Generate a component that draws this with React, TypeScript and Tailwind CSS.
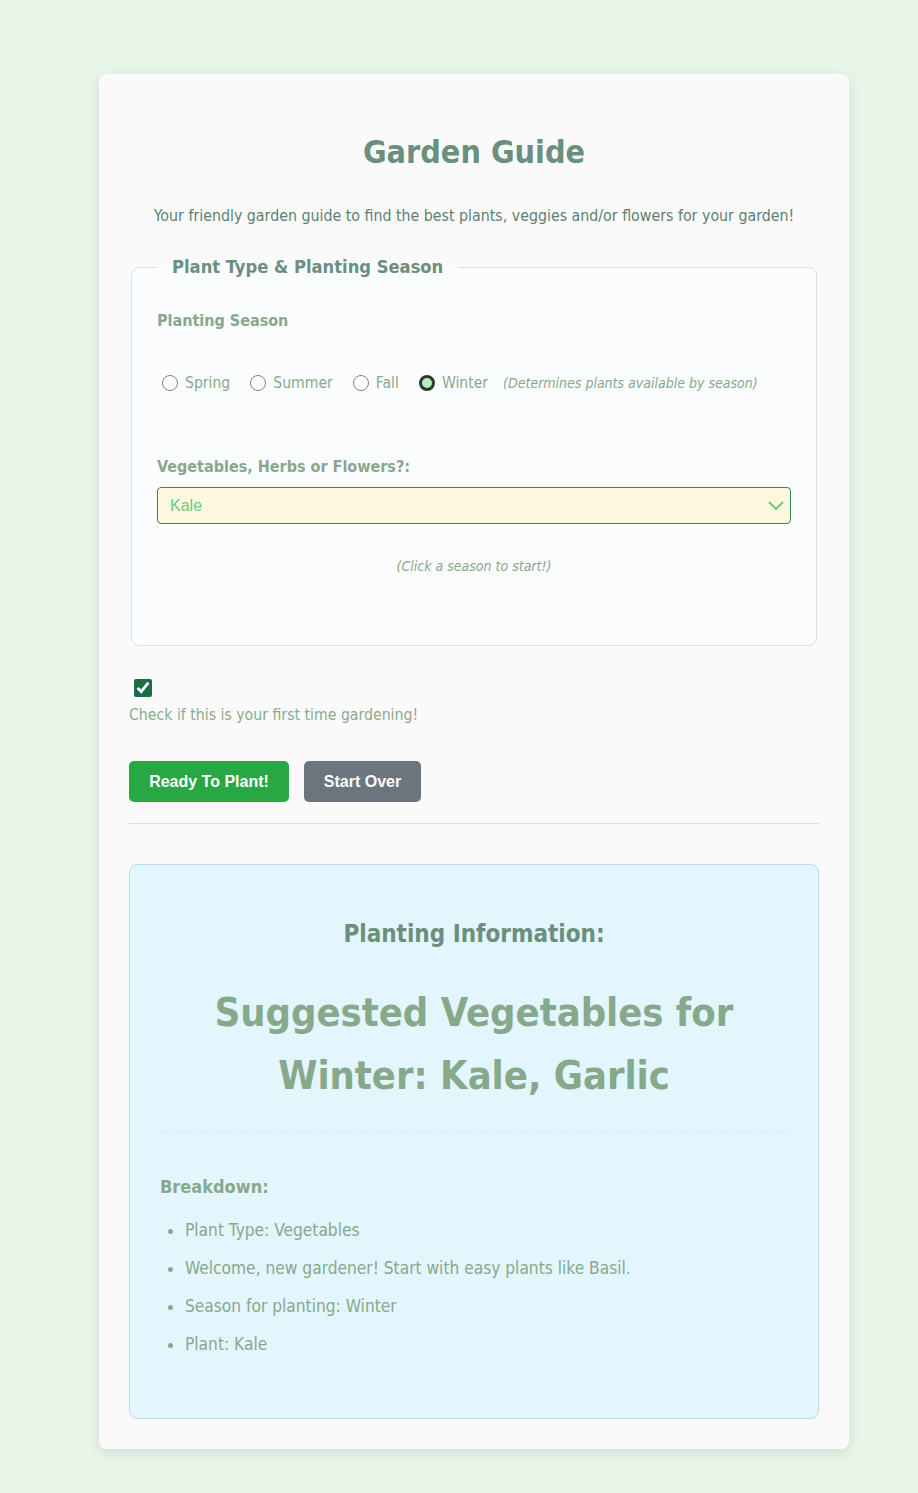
import React, { useState } from 'react';

const seasons = ['Spring', 'Summer', 'Fall', 'Winter'];

const breakdown = [
  'Plant Type: Vegetables',
  'Welcome, new gardener! Start with easy plants like Basil.',
  'Season for planting: Winter',
  'Plant: Kale',
];

export default function App() {
  const [season, setSeason] = useState('Winter');
  const [firstTime, setFirstTime] = useState(true);

  return (
    <div className="min-h-screen bg-[#e8f5e9] pt-[74px] pb-[45px] pl-[99px] font-['DejaVu_Sans_Condensed','DejaVu_Sans',sans-serif] font-stretch-condensed">
      {/* ── Card ── */}
      <div className="w-[750px] rounded-lg bg-[#fafafa] p-[30px] shadow-[0_4px_14px_rgba(0,0,0,0.1)]">
        <h1 className="mt-[28px] text-center text-[32px] leading-[40px] font-bold text-[#6b8f7d]">
          Garden Guide
        </h1>
        <p className="mt-[32px] text-center text-[15.8px] leading-[24px] text-[#5f7f70]">
          Your friendly garden guide to find the best plants, veggies and/or flowers for your garden!
        </p>

        {/* Plant type + season */}
        <fieldset className="mx-[2px] mt-[27px] rounded-lg border border-[#d3e3ee] bg-[#fbfcfe] px-[25px] pt-[30px] pb-[69px]">
          <legend className="px-[15px] text-[18.2px] leading-[24px] font-bold text-[#6b8f7d]">
            Plant Type &amp; Planting Season
          </legend>

          <div className="text-[16px] leading-[24px] font-bold text-[#88a88c]">Planting Season</div>

          <div className="mt-[38px] flex items-center text-[15.6px] leading-[24px] text-[#88a88c]">
            {seasons.map((s) => (
              <label key={s} className="mr-[15px] flex items-center">
                <input
                  type="radio"
                  name="season"
                  checked={season === s}
                  onChange={() => setSeason(s)}
                  className="mr-[7px] ml-[5px] h-[16px] w-[16px] appearance-none rounded-full border border-[#808080] bg-white checked:border-[3px] checked:border-[#2c3b32] checked:bg-[#b6efc2]"
                />
                {s}
              </label>
            ))}
            <span className="text-[14px] italic">(Determines plants available by season)</span>
          </div>

          <div className="mt-[60px] text-[16px] leading-[24px] font-bold text-[#88a88c]">
            Vegetables, Herbs or Flowers?:
          </div>
          <div className="relative mt-[8px]">
            <select className="h-[37px] w-full appearance-none rounded-[4px] border border-[#3d8a45] bg-[#fff8e1] px-[12px] font-['Liberation_Sans',sans-serif] text-[16px] text-[#66cc77]">
              <option>Kale</option>
              <option>Garlic</option>
            </select>
            <svg
              className="pointer-events-none absolute top-[10px] right-[6px] h-[18px] w-[18px] text-[#66cc77]"
              viewBox="0 0 18 18"
              fill="none"
              stroke="currentColor"
              strokeWidth="2"
            >
              <path d="M2 5l7 7 7-7" />
            </svg>
          </div>

          <p className="mt-[32px] text-center text-[14px] leading-[20px] italic text-[#88a88c]">
            (Click a season to start!)
          </p>
        </fieldset>

        {/* First-timer checkbox */}
        <input
          type="checkbox"
          checked={firstTime}
          onChange={(e) => setFirstTime(e.target.checked)}
          className="mt-[33px] ml-[5px] block h-[18px] w-[18px] accent-[#1b6b45]"
        />
        <label className="mt-[6px] block text-[15.7px] leading-[24px] text-[#8aab8e]">
          Check if this is your first time gardening!
        </label>

        <div className="mt-[34px] flex gap-[15px] font-['Liberation_Sans',sans-serif] text-[16px] font-bold text-white">
          <button type="button" className="h-[41px] w-[160px] rounded-[5px] bg-[#28a745]">
            Ready To Plant!
          </button>
          <button type="button" className="h-[41px] w-[117px] rounded-[5px] bg-[#6c757d]">
            Start Over
          </button>
        </div>

        <hr className="mt-[21px] border-[#dddddd]" />

        {/* Result */}
        <div className="mt-[40px] rounded-lg border border-[#b8dcf0] bg-[#e3f5fd] px-[30px] pt-[54px] pb-[48px]">
          <h2 className="text-center text-[24px] leading-[30px] font-bold text-[#6b8f7d]">
            Planting Information:
          </h2>
          <h3 className="mt-[32px] text-center text-[39.5px] leading-[63px] font-bold text-[#86a88b]">
            Suggested Vegetables for Winter: Kale, Garlic
          </h3>
          <div className="mt-[24px] border-t border-dashed border-[#cfe9f5]" />
          <div className="mt-[43px] text-[18px] leading-[24px] font-bold text-[#88a88c]">Breakdown:</div>
          <ul className="mt-[19px] list-disc pl-[25px] text-[17.2px] leading-[24px] text-[#88a88c] marker:text-[#88a88c]">
            {breakdown.map((b) => (
              <li key={b} className="mb-[14px]">
                {b}
              </li>
            ))}
          </ul>
        </div>
      </div>
    </div>
  );
}
